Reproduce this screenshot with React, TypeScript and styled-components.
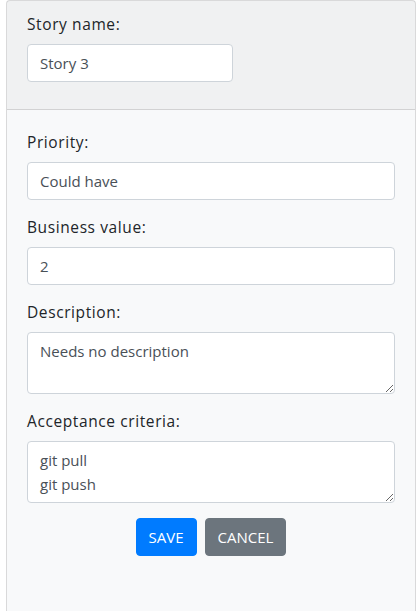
import React from 'react';
import styled, { createGlobalStyle } from 'styled-components';

const GlobalStyle = createGlobalStyle`
  html, body {
    margin: 0;
    padding: 0;
    background: #fff;
  }
  body {
    font-family: 'Open Sans', 'Noto Sans', 'Liberation Sans', sans-serif;
    font-size: 16px;
    line-height: 1.5;
    color: #212529;
    overflow: hidden;
  }
  * {
    box-sizing: border-box;
  }
`;

const Page = styled.div`
  padding: 0 4px 0 6px;
`;

const Card = styled.div`
  display: flex;
  flex-direction: column;
  min-height: 640px;
  background: #f8f9fa;
  border: 1px solid rgba(0, 0, 0, 0.125);
  border-radius: 4px;
`;

const CardHeader = styled.div`
  padding: 11px 20px 12px;
  background: rgba(0, 0, 0, 0.03);
  border-bottom: 1px solid rgba(0, 0, 0, 0.125);
`;

const CardBody = styled.form`
  padding: 20px 20px 20px;
  flex: 1;
`;

const FormGroup = styled.div`
  margin-bottom: 15px;
`;

const Label = styled.label`
  display: block;
  margin-bottom: 8px;
  font-size: 15.5px;
  line-height: 24px;
  letter-spacing: 0.6px;
  color: #212529;
`;

const Input = styled.input<{ $width?: number }>`
  display: block;
  width: ${({ $width }) => ($width ? `${$width}px` : '100%')};
  height: 38px;
  padding: 6px 12px;
  font-family: inherit;
  font-size: 15px;
  line-height: 24px;
  color: #495057;
  background: #fff;
  border: 1px solid #ced4da;
  border-radius: 4px;
  outline: none;
`;

const TextArea = styled.textarea`
  display: block;
  width: 100%;
  height: 62px;
  padding: 6px 12px;
  font-family: inherit;
  font-size: 15px;
  line-height: 24px;
  color: #495057;
  background: #fff;
  border: 1px solid #ced4da;
  border-radius: 4px;
  outline: none;
  resize: vertical;
  overflow: hidden;
`;

const Actions = styled.div`
  display: flex;
  justify-content: center;
  gap: 8px;
`;

const Button = styled.button<{ $variant: 'primary' | 'secondary' }>`
  height: 38px;
  padding: 6px 12px;
  font-family: inherit;
  font-size: 15px;
  line-height: 24px;
  text-transform: uppercase;
  color: #fff;
  border: 1px solid ${({ $variant }) => ($variant === 'primary' ? '#007bff' : '#6c757d')};
  background: ${({ $variant }) => ($variant === 'primary' ? '#007bff' : '#6c757d')};
  border-radius: 4px;
  cursor: pointer;
`;

export default function App() {
  return (
    <>
      <GlobalStyle />
      <Page>
        <Card>
          <CardHeader>
            <FormGroup>
              <Label htmlFor="name">Story name:</Label>
              <Input id="name" $width={206} defaultValue="Story 3" />
            </FormGroup>
          </CardHeader>
          <CardBody>
            <FormGroup>
              <Label htmlFor="priority">Priority:</Label>
              <Input id="priority" defaultValue="Could have" />
            </FormGroup>
            <FormGroup>
              <Label htmlFor="value">Business value:</Label>
              <Input id="value" defaultValue="2" />
            </FormGroup>
            <FormGroup>
              <Label htmlFor="desc">Description:</Label>
              <TextArea id="desc" rows={2} defaultValue="Needs no description" />
            </FormGroup>
            <FormGroup>
              <Label htmlFor="criteria">Acceptance criteria:</Label>
              <TextArea id="criteria" rows={2} defaultValue={'git pull\ngit push'} />
            </FormGroup>
            <Actions>
              <Button type="button" $variant="primary">Save</Button>
              <Button type="button" $variant="secondary">Cancel</Button>
            </Actions>
          </CardBody>
        </Card>
      </Page>
    </>
  );
}
